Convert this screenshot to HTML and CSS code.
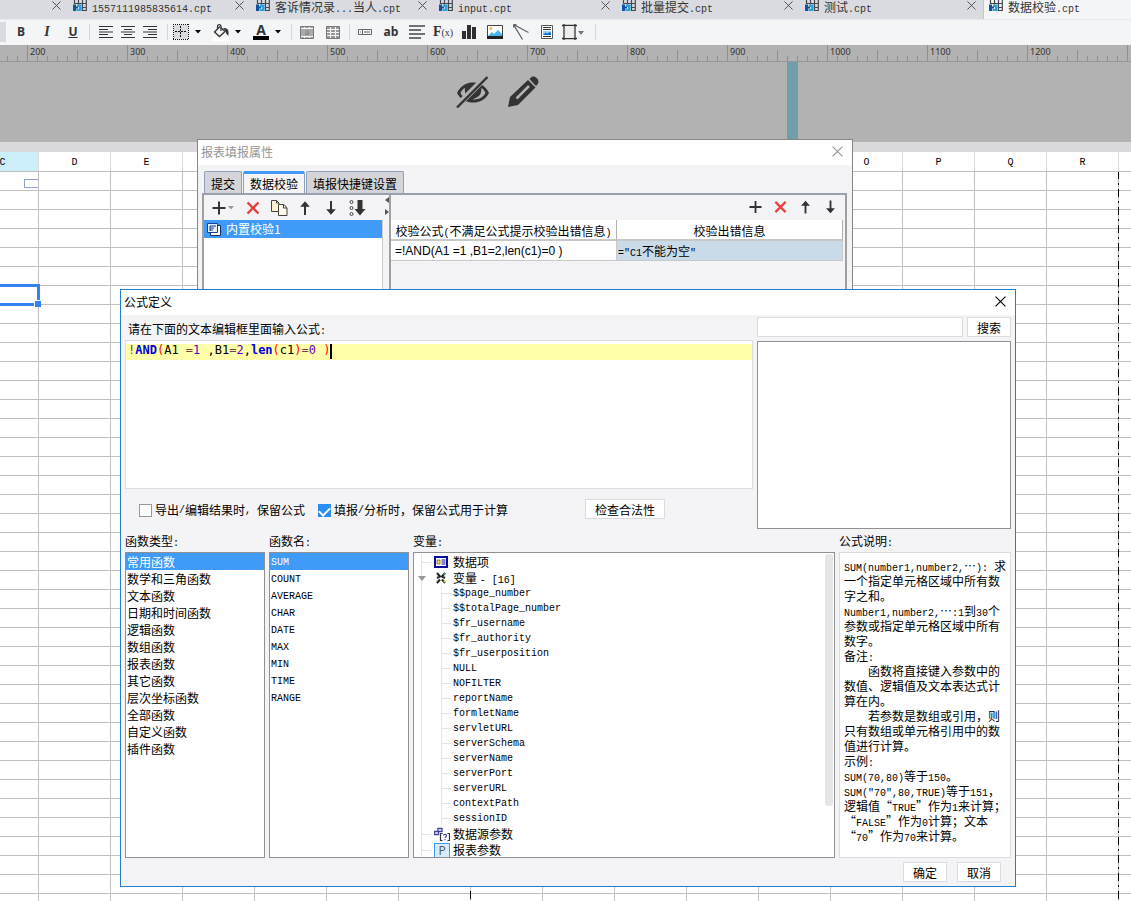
FILE: index.html
```html
<!DOCTYPE html>
<html lang="zh-CN">
<head>
<meta charset="utf-8">
<title>数据校验.cpt</title>
<link rel="stylesheet" href="styles.css">
</head>
<body>
<svg class="defs" aria-hidden="true">
  <symbol id="cpt" viewBox="0 0 14 12"><path d="M1.500 0v4M5.500 0v4.500M9.500 0v11M13.300 0v11M1 3.500h12.500M9 7.500h4.500M9 10.500h4.500" fill="none" stroke="#44474c" stroke-width="1.200"/><path d="M0 4.500h3v2h2v2H3v2.500H0z" fill="#0d55a0"/><path d="M4 4.500h4.500V11H6V7H4zM3.500 9H6v2H3.500z" fill="#2f9fdc"/></symbol>
  <symbol id="close" viewBox="0 0 10 10"><path d="M.5.5l9 9M9.500.5l-9 9" fill="none" stroke="currentColor"/></symbol>
  <symbol id="caret" viewBox="0 0 6 4"><path d="M0 0h6L3 3.500z" fill="currentColor"/></symbol>
  <symbol id="plus" viewBox="0 0 14 14"><path d="M7 .5v13M.5 7h13" fill="none" stroke="#333" stroke-width="2"/></symbol>
  <symbol id="cross" viewBox="0 0 14 14"><path d="M1.500 1.500l11 11M12.500 1.500l-11 11" fill="none" stroke="#e8403c" stroke-width="2.400"/></symbol>
  <symbol id="up" viewBox="0 0 14 14"><path d="M7 14V3" stroke="#333" stroke-width="2"/><path d="M7 .3l4.800 5.400H2.200z" fill="#333"/></symbol>
  <symbol id="down" viewBox="0 0 14 14"><path d="M7 0v11" stroke="#333" stroke-width="2"/><path d="M7 13.700l4.800-5.400H2.200z" fill="#333"/></symbol>
</svg>

<nav class="file-tabs">
  <div class="file-tab"><span class="file-name"></span><button aria-label="关闭"><svg><use href="#close"/></svg></button></div>
  <div class="file-tab"><svg class="cpt"><use href="#cpt"/></svg><span class="file-name"><span class="m">1557111985835614.cpt</span></span><button aria-label="关闭"><svg><use href="#close"/></svg></button></div>
  <div class="file-tab"><svg class="cpt"><use href="#cpt"/></svg><span class="file-name">客诉情况录<span class="m">...</span>当人<span class="m">.cpt</span></span><button aria-label="关闭"><svg><use href="#close"/></svg></button></div>
  <div class="file-tab"><svg class="cpt"><use href="#cpt"/></svg><span class="file-name"><span class="m">input.cpt</span></span><button aria-label="关闭"><svg><use href="#close"/></svg></button></div>
  <div class="file-tab"><svg class="cpt"><use href="#cpt"/></svg><span class="file-name">批量提交<span class="m">.cpt</span></span><button aria-label="关闭"><svg><use href="#close"/></svg></button></div>
  <div class="file-tab"><svg class="cpt"><use href="#cpt"/></svg><span class="file-name">测试<span class="m">.cpt</span></span><button aria-label="关闭"><svg><use href="#close"/></svg></button></div>
  <div class="file-tab active"><svg class="cpt"><use href="#cpt"/></svg><span class="file-name">数据校验<span class="m">.cpt</span></span></div>
</nav>

<div class="toolbar" role="toolbar">
  <span class="size-stub"></span>
  <div class="group"><button class="bold">B</button><button class="italic">I</button><button class="under">U</button></div>
  <i class="sep"></i>
  <div class="group narrow">
    <button aria-label="左对齐"><svg width="14" height="12"><path d="M0 .5h14M0 3.500h9M0 6h14M0 8.500h9M0 11.500h14" stroke="#333" stroke-width="1.200"/></svg></button>
    <button aria-label="居中"><svg width="14" height="12"><path d="M0 .5h14M3 3.500h8M0 6h14M3 8.500h8M0 11.500h14" stroke="#333" stroke-width="1.200"/></svg></button>
    <button aria-label="右对齐"><svg width="14" height="12"><path d="M0 .5h14M5 3.500h9M0 6h14M5 8.500h9M0 11.500h14" stroke="#333" stroke-width="1.200"/></svg></button>
  </div>
  <i class="sep"></i>
  <div class="group split">
    <button aria-label="边框"><svg width="16" height="16"><path d="M1 1h14v14H1z" fill="#dadbdf"/><path d="M0 .5h16M0 15.500h16M.5 0v16M15.500 0v16" stroke="#111" stroke-dasharray="1 1"/><path d="M2 7.500h12M7.500 2v12" stroke="#111" stroke-dasharray="2 1"/></svg></button><button class="drop" aria-label="更多"><svg width="6" height="4"><use href="#caret"/></svg></button>
    <button aria-label="背景色"><svg width="18" height="17"><path d="M1 13h16v4H1z" fill="#fff"/><path d="M8 2.500L2.500 8l5 4.500L13 7.500 8.500 3.500" fill="#f4f5f7" stroke="#333" stroke-width="1.300"/><path d="M5.500 5V2a1.800 1.800 0 013.500 0v5" fill="none" stroke="#333" stroke-width="1.200"/><path d="M11 4c3-.5 5.500 1 5.500 4v3.500C14.500 11 14 9 13.500 7z" fill="#333"/></svg></button><button class="drop" aria-label="更多"><svg width="6" height="4"><use href="#caret"/></svg></button>
    <button class="font-color"><b>A</b></button><button class="drop" aria-label="更多"><svg width="6" height="4"><use href="#caret"/></svg></button>
  </div>
  <i class="sep"></i>
  <div class="group">
    <button aria-label="合并"><svg width="14" height="13"><path d="M.5.5h13v12H.5z" fill="#aaa" stroke="#777"/><path d="M1 2.500h12M1 10.500h12" stroke="#f4f5f7"/><path d="M4.500 1v1M9.500 1v1M4.500 11v1M9.500 11v1" stroke="#f4f5f7"/><path d="M5.500 5h3v3.500h-3v-1.500h3" fill="none" stroke="#888"/></svg></button>
    <button aria-label="拆分"><svg width="14" height="13"><path d="M.5.5h13v12H.5z" fill="#999" stroke="#777"/><path d="M1 3.500h12M1 6.500h12M1 9.500h12M4.500 1v11M9.500 1v11" stroke="#f4f5f7"/></svg></button>
  </div>
  <i class="sep"></i>
  <div class="group last">
    <button aria-label="控件"><svg width="14" height="6"><path d="M.5.5h13v5H.5zM4.500 1v4M6 3h6M2 3h1" fill="none" stroke="#666"/></svg></button>
    <button class="ab">ab</button>
    <button aria-label="富文本"><svg width="16" height="14"><path d="M0 1h16M0 5h12M0 9h16M0 13h12" stroke="#444" stroke-width="1.500"/></svg></button>
    <button class="fx">F<small>(x)</small></button>
    <button aria-label="图表"><svg width="14" height="14"><path d="M0 6h4v8H0zM5 0h4v14H5zM10 2h4v12h-4z" fill="#2f2f2f"/></svg></button>
    <button aria-label="图片"><svg width="16" height="14"><path d="M.5.500h15v13H.5z" fill="#fff" stroke="#444"/><circle cx="3.800" cy="3.500" r="1.500" fill="#f6b04a"/><path d="M1 11L5 7l2 2 4-4 4 4v2z" fill="#45b5ee"/><path d="M0 11h16v3H0z" fill="#222"/></svg></button>
    <button aria-label="斜线"><svg width="16" height="16"><path d="M.5.5l15 8M.5.5l9 15M.5.5v3M.5.5h3" fill="none" stroke="#666" stroke-width="1.300"/></svg></button>
    <button aria-label="子报表"><svg width="12" height="14"><path d="M.5.5h11v13H.5z" fill="#fff" stroke="#555"/><path d="M2 2.500h8M2 4.500h8M2 11.500h8" stroke="#333"/><path d="M2 6h8v4H2z" fill="#9ad0f5"/><path d="M2 10l2.500-2.500 2 1 2-1.500L10 8v2z" fill="#1271c8"/></svg></button>
    <button aria-label="悬浮元素"><svg width="22" height="16"><path d="M2 0v16M13 0v16M0 1.500h15M0 14.500h15" stroke="#333" stroke-width="1.300"/><path d="M3 2h9v12H3z" fill="#eee"/><path d="M16 7h6l-3 4z" fill="#777"/></svg></button>
  </div>
  <i class="sep"></i>
</div>

<div class="ruler">
  <span></span><span>200</span><span>300</span><span>400</span><span>500</span><span>600</span><span>700</span><span>800</span><span>900</span><span>1000</span><span>1100</span><span>1200</span><span></span>
</div>

<section class="banner">
  <svg width="34" height="32" viewBox="0 0 34 32" aria-label="隐藏"><path d="M1 17C5 9 11 6.500 17 6.500S29 9 33 17c-4 7.500-10 9.500-16 9.500S5 24.500 1 17z" fill="#333"/><path d="M4.500 17c1-2.500 2.500-4 4.500-5-.6 4 .3 6.500 2.500 8.500l-2 1.800C7.500 21 5.600 19.500 4.500 17zM29.500 17c-1-2.500-2.300-4-4.300-5 .6 4-.9 8.500-5.700 10l-3 1.500c6.500 0 10.500-2 13-6.500z" fill="#b2b2b2"/><path d="M31 0L0 31" stroke="#b2b2b2" stroke-width="6"/><path d="M31.500 1L1 31.500" stroke="#333" stroke-width="2.400"/></svg>
  <svg width="32" height="32" viewBox="0 0 32 32" aria-label="编辑"><path d="M0 31l2-10L20 4l7.500 7.500L10 29z" fill="#333"/><path d="M8.500 22.500L21 10" stroke="#b2b2b2" stroke-width="2.500"/><path d="M21.500 3l2-2c3-2 8.500 2.500 6.500 6.500l-2 2.500z" fill="#333"/></svg>
  <i class="strip"></i>
</section>

<main class="sheet">
  <div class="columns"><span class="current">C</span><span>D</span><span>E</span><span>F</span><span>G</span><span>H</span><span>I</span><span>J</span><span>K</span><span>L</span><span>M</span><span>N</span><span>O</span><span>P</span><span>Q</span><span>R</span><span></span></div>
  <div class="cells"><i class="widget"></i><i class="selection"></i></div>
</main>

<section class="window props" aria-label="报表填报属性">
  <header><span>报表填报属性</span><button aria-label="关闭"><svg><use href="#close"/></svg></button></header>
  <div class="props-body">
    <div class="tabs" role="tablist"><button role="tab">提交</button><button role="tab" class="on">数据校验</button><button role="tab">填报快捷键设置</button></div>
    <div class="panel">
      <div class="left">
        <div class="tools">
          <button class="add" aria-label="添加"><svg><use href="#plus"/></svg><svg class="tiny"><use href="#caret"/></svg></button>
          <button aria-label="删除"><svg><use href="#cross"/></svg></button>
          <button aria-label="复制"><svg class="big" viewBox="0 0 17 16"><path d="M.5.5h5L8 3v8.500H.5zM5.500.5V3H8" fill="#fff3d2" stroke="#444"/><path d="M7.500 4.500H13L16 8v7.500H7.500zM12.500 4.500V8H16" fill="#fff9ea" stroke="#444"/></svg></button>
          <button aria-label="上移"><svg><use href="#up"/></svg></button>
          <button aria-label="下移"><svg><use href="#down"/></svg></button>
          <button aria-label="排序"><svg class="big" viewBox="0 0 16 16"><g fill="none" stroke="#444"><circle cx="2" cy="2" r="1.500"/><circle cx="2" cy="8" r="1.500"/><circle cx="2" cy="14" r="1.500"/></g><path d="M8 0h5v9h3l-5.500 6.500L5 9h3z" fill="#333"/></svg></button>
        </div>
        <div class="checks"><div class="check"><svg width="14" height="13"><path d="M3.500 2.500h10v10h-10z" fill="#fff" stroke="#1c2f6d"/><path d="M.5.500h10v9H.5z" fill="#e6efff" stroke="#1c3c96"/><path d="M3 3h6M3 5h4M3 7h3M3 3v5" stroke="#1c3c96"/></svg>内置校验1</div></div>
      </div>
      <div class="divider"><svg width="4" height="18"><path d="M4 0v6L0 3zM0 12v6l4-3z" fill="#555"/></svg></div>
      <div class="right">
        <div class="tools end">
          <button aria-label="添加"><svg><use href="#plus"/></svg></button>
          <button aria-label="删除"><svg><use href="#cross"/></svg></button>
          <button aria-label="上移"><svg><use href="#up"/></svg></button>
          <button aria-label="下移"><svg><use href="#down"/></svg></button>
        </div>
        <table>
          <thead><tr><th>校验公式<span class="m">(</span>不满足公式提示校验出错信息<span class="m">)</span></th><th>校验出错信息</th></tr></thead>
          <tbody><tr><td class="expr">=!AND(A1 =1 ,B1=2,len(c1)=0 )</td><td class="msg"><span class="m">="C1</span>不能为空<span class="m">"</span></td></tr></tbody>
        </table>
      </div>
    </div>
  </div>
</section>

<section class="window formula" aria-label="公式定义">
  <header><span>公式定义</span><button aria-label="关闭"><svg><use href="#close"/></svg></button></header>
  <div class="formula-body">
    <div class="top">
      <div class="edit">
        <label id="editor-label">请在下面的文本编辑框里面输入公式<span class="m">:</span></label>
        <div class="editor" role="textbox" aria-labelledby="editor-label" contenteditable="true" spellcheck="false"><div class="line"><span class="op">!</span><b>AND</b><span class="par">(</span>A1 <span class="op">=</span><span class="num">1</span> ,B1<span class="op">=</span><span class="num">2</span>,<b>len</b><span class="par">(</span>c1<span class="par">)</span><span class="op">=</span><span class="num">0</span> <span class="par">)</span><i class="cursor"></i></div></div>
        <div class="options">
          <label><input type="checkbox">导出<span class="m">/</span>编辑结果时<span class="m">, </span>保留公式</label>
          <label><input type="checkbox" checked>填报<span class="m">/</span>分析时，保留公式用于计算</label>
          <button class="btn wide">检查合法性</button>
        </div>
      </div>
      <div class="search">
        <div class="search-row"><input type="text" aria-label="搜索函数"><button class="btn">搜索</button></div>
        <div class="results"></div>
      </div>
    </div>
    <div class="lists">
      <div class="col narrow-col"><h3>函数类型<span class="m">:</span></h3>
        <ul class="box rows" role="listbox"><li class="on">常用函数</li><li>数学和三角函数</li><li>文本函数</li><li>日期和时间函数</li><li>逻辑函数</li><li>数组函数</li><li>报表函数</li><li>其它函数</li><li>层次坐标函数</li><li>全部函数</li><li>自定义函数</li><li>插件函数</li></ul></div>
      <div class="col narrow-col"><h3>函数名<span class="m">:</span></h3>
        <ul class="box rows names" role="listbox"><li class="on">SUM</li><li>COUNT</li><li>AVERAGE</li><li>CHAR</li><li>DATE</li><li>MAX</li><li>MIN</li><li>TIME</li><li>RANGE</li></ul></div>
      <div class="col vars"><h3>变量<span class="m">:</span></h3>
        <div class="box tree-box">
          <ul class="tree">
            <li><div class="node"><svg width="14" height="12"><path d="M1 1h12v10H1z" fill="#fff" stroke="#0a0a9c" stroke-width="2"/><path d="M3 4h3v4H3z" fill="#ffe14a" stroke="#333" stroke-width=".6"/><path d="M7.500 4h4M7.500 6h4M7.500 8h4" stroke="#0a0a9c"/></svg>数据项</div></li>
            <li><div class="node open"><svg width="14" height="12"><path d="M3 1l3 3.500L3 6M11 1L8 4.500 11 6M3 11l3-3.500M11 11L8 7.500" fill="none" stroke="#222" stroke-width="2"/><path d="M9.500 1h2v2h-2z" fill="#3c9b93"/><path d="M9.500 8.500h2v2h-2z" fill="#d3d33c"/></svg><span>变量 <span class="m">- [16]</span></span></div>
              <ul><li>$$page_number</li><li>$$totalPage_number</li><li>$fr_username</li><li>$fr_authority</li><li>$fr_userposition</li><li>NULL</li><li>NOFILTER</li><li>reportName</li><li>formletName</li><li>servletURL</li><li>serverSchema</li><li>serverName</li><li>serverPort</li><li>serverURL</li><li>contextPath</li><li>sessionID</li></ul></li>
            <li><div class="node"><svg width="16" height="15"><path d="M4 1.500h4v3H4zM.5 4.500h4v3h-4z" fill="#fff" stroke="#44449c" stroke-width="1.300"/><path d="M8.500 6.500h-2v7h2M13.500 6.500h2v7h-2" fill="none" stroke="#333" stroke-width="1.200"/><path d="M9.500 8.500c0-1.500 3-1.500 3 0s-1.500 1.300-1.500 2.500M11 12v1.200" fill="none" stroke="#44449c" stroke-width="1.200"/></svg>数据源参数</div></li>
            <li><div class="node"><i class="p-icon">P</i>报表参数</div></li>
          </ul>
          <i class="thumb"></i>
        </div></div>
      <div class="col desc-col"><h3>公式说明<span class="m">:</span></h3>
        <div class="box desc"><span class="m">SUM(number1,number2,</span>…<span class="m">): </span>求<br>一个指定单元格区域中所有数<br>字之和。<br><span class="m">Number1,number2,</span>…<span class="m">:1</span>到<span class="m">30</span>个<br>参数或指定单元格区域中所有<br>数字。<br>备注<span class="m">:</span><br>　　函数将直接键入参数中的<br>数值、逻辑值及文本表达式计<br>算在内。<br>　　若参数是数组或引用，则<br>只有数组或单元格引用中的数<br>值进行计算。<br>示例<span class="m">:</span><br><span class="m">SUM(70,80)</span>等于<span class="m">150</span>。<br><span class="m">SUM("70",80,TRUE)</span>等于<span class="m">151</span>，<br>逻辑值“<span class="m">TRUE</span>”作为<span class="m">1</span>来计算；<br>“<span class="m">FALSE</span>”作为<span class="m">0</span>计算；文本<br>“<span class="m">70</span>”作为<span class="m">70</span>来计算。</div></div>
    </div>
    <footer><button class="btn">确定</button><button class="btn">取消</button></footer>
  </div>
</section>
</body>
</html>
```
FILE: styles.css
```css
* { box-sizing: border-box; }
body {
  margin: 0;
  height: 100vh;
  overflow: hidden;
  position: relative;
  display: flex;
  flex-direction: column;
  font: 12px/16px "Noto Sans CJK SC", sans-serif;
  color: #000;
  background: #fff;
}
ul { list-style: none; margin: 0; padding: 0; }
button { font: inherit; color: inherit; background: none; border: 0; padding: 0; display: flex; align-items: center; justify-content: center; }
svg { display: block; flex: none; }
.defs { position: absolute; width: 0; height: 0; }
.m { font-family: "Liberation Mono", monospace; font-size: 10px; line-height: 1px; white-space: pre; }

/* file tabs */
.file-tabs { display: flex; flex: none; height: 19px; margin-left: -115px; background: #d9dbe0; overflow: hidden; }
.file-tab { flex: none; width: 183px; height: 19px; display: flex; align-items: flex-start; padding: 0 7px 0 5px; color: #333; }
.file-tab.active { background: #f4f5f7; border-left: 1px solid #c4c6cb; flex: 1 0 183px; }
.file-tab .cpt { width: 14px; height: 12px; margin-right: 5px; }
.file-name { flex: 1; line-height: 13px; white-space: nowrap; }
.file-tab button { color: #444; height: 11px; }
.file-tab button svg { width: 9px; height: 9px; }

/* main toolbar */
.toolbar { flex: none; height: 26px; display: flex; align-items: center; background: #f4f5f7; border-top: 1px solid #e8e9ec; padding-bottom: 1px; color: #333; }
.size-stub { width: 6px; height: 20px; background: #d9dbe0; margin-right: 2px; }
.group { display: flex; }
.group button { width: 26px; height: 22px; }
.group.narrow { padding: 0 3px; }
.group.narrow button { width: 22px; }
.group.split { padding-right: 4px; }
.group.split button { width: 22px; }
.group.split .drop { width: 12px; color: #000; margin-right: 6px; }
.group.split .drop:last-child { margin-right: 0; }
.group.last { padding-right: 6px; }
.sep { flex: none; width: 1px; height: 16px; background: #d5d6da; margin: 0 2px 0 3px; }
.bold, .italic, .under, .ab { font-family: "Open Sans", sans-serif; font-weight: 700; }
.group .italic { font-family: "Liberation Serif", serif; font-style: italic; font-size: 14px; }
.under { text-decoration: underline; }
.font-color b { width: 16px; height: 16px; border-bottom: 4px solid #000; font: 700 14px/11px "Open Sans", sans-serif; }
.fx { font: 700 14px "Liberation Serif", serif; }
.fx small { font-size: 10px; font-weight: 400; }

/* ruler */
.ruler {
  flex: none; height: 17px; display: flex; margin-left: -73px; overflow: hidden;
  background-color: #b2b2b2; border-bottom: 1px solid #979797;
  background-image: repeating-linear-gradient(to right, #8f8f8f 0 1px, transparent 1px 10px), repeating-linear-gradient(to right, #8f8f8f 0 1px, transparent 1px 50px);
  background-size: 100% 5px, 100% 11px;
  background-position: 0 100%; background-repeat: no-repeat;
}
.ruler span { flex: 0 0 100px; border-left: 1px solid #8f8f8f; padding-left: 2px; font: 9px/14px "Noto Sans", sans-serif; color: #333; }

.banner { flex: none; height: 80px; background: #b2b2b2; display: flex; gap: 18px; padding: 14px 0 0 456px; position: relative; }
.strip { position: absolute; left: 787px; top: 0; bottom: 0; width: 11px; background: #6f9fab; }

/* sheet */
.sheet { flex: 1; display: flex; flex-direction: column; border-top: 10px solid #dadadc; }
.columns { flex: none; display: flex; height: 20px; border-bottom: 1px solid #c0c0c0; margin-left: -33px; overflow: hidden; }
.columns span { flex: 0 0 72px; border-right: 1px solid #dadadc; font: 10px/22px "Liberation Mono", monospace; text-align: center; }
.columns .current { background: #cdeffc; }
.cells {
  flex: 1; position: relative;
  background-image:
    repeating-linear-gradient(to bottom, #000 0 8px, transparent 8px 12px, #000 12px 14px, transparent 14px 18px),
    repeating-linear-gradient(to bottom, #000 0 8px, transparent 8px 12px, #000 12px 14px, transparent 14px 18px),
    linear-gradient(to right, #c0c0c0 1px, transparent 1px),
    linear-gradient(to bottom, transparent 18px, #c0c0c0 18px);
  background-size: 1px 18px, 1px 18px, 72px 19px, 72px 19px;
  background-position: 470px -1px, 1118px -1px, 38px 0, 0 0;
  background-repeat: repeat-y, repeat-y, repeat, repeat;
}
.widget { position: absolute; left: 24px; top: 7px; width: 14px; height: 9px; border: 1px solid #8fa3cc; border-right: 0; }
.selection { position: absolute; left: -4px; top: 112px; width: 44px; height: 22px; border: 3px solid #3382f0; }
.selection::after { content: ""; position: absolute; right: -4px; bottom: -4px; width: 6px; height: 6px; background: #3382f0; border: solid #fff; border-width: 1px 0 0 1px; }

/* windows */
.window { position: absolute; background: #f4f4f6; }
.window header { height: 25px; background: #fff; display: flex; justify-content: space-between; align-items: center; padding: 0 9px 2px 3px; }
.window header svg { width: 11px; height: 11px; }
.props { left: 197px; right: 278px; top: 139px; height: 400px; border: 1px solid #868686; display: flex; flex-direction: column; color: #000; }
.props header { color: #949494; }
.props-body { flex: 1; display: flex; flex-direction: column; padding: 6px 5px 0 4px; }
.tabs { display: flex; gap: 1px; padding-left: 2px; align-items: flex-end; }
.tabs button { height: 22px; padding: 2px 6px 0; border: 1px solid #8e9fbc; border-bottom: 0; background: #d5d5d9; border-radius: 2px 2px 0 0; white-space: nowrap; }
.tabs .on { background: #f4f4f6; border-top: 3px solid #409bf8; padding-top: 0; }
.panel { flex: 1; display: flex; border: 2px solid #98a1b0; border-color: #98a1b0 #a0a0a0; }
.left { flex: 0 0 179px; display: flex; flex-direction: column; }
.tools { display: flex; height: 25px; align-items: center; }
.tools button { width: 26px; height: 24px; }
.tools svg { width: 14px; height: 14px; }
.tools .big { width: 17px; height: 16px; }
.tools .add { width: 36px; justify-content: flex-start; gap: 2px; padding-left: 8px; color: #999; }
.tools .tiny { width: 6px; height: 4px; }
.tools.end { justify-content: flex-end; height: 23px; }
.tools.end button { width: 25px; }
.tools.end svg { width: 13px; height: 14px; }
.checks { flex: 1; background: #fff; border-right: 1px solid #ccc; }
.check { display: flex; gap: 5px; align-items: center; height: 18px; background: #409bf8; color: #fff; padding-left: 3px; }
.divider { flex: 0 0 8px; border-right: 2px solid #a0a0a0; display: flex; justify-content: flex-end; padding-top: 2px; }
.right { flex: 1; padding-right: 2px; }
.right table { width: 100%; border-collapse: separate; border-spacing: 0; table-layout: fixed; margin-top: 2px; }
.right th { height: 21px; padding: 3px 0 0; font-weight: 400; background: #fff; border-bottom: 2px solid #c8c8c8; border-right: 1px solid #b0b0b0; white-space: nowrap; }
.right td { height: 20px; padding: 0 0 0 4px; border-bottom: 1px solid #c8c8c8; border-right: 1px solid #c8c8c8; line-height: 18px; }
.expr { background: #fff; font-family: "Liberation Sans", Arial, sans-serif; }
.right .msg { background: #c9dbe9; padding-left: 1px; }

.formula { left: 120px; right: 115px; top: 289px; border: 1px solid #1c80cf; }
.formula-body { padding: 1px 4px 4px; }
.top { display: flex; gap: 4px; }
.edit { flex: 1; display: flex; flex-direction: column; }
.edit > label { height: 24px; line-height: 26px; padding-left: 3px; }
.editor { height: 149px; background: #fff; border: 1px solid #dcdce0; padding-top: 3px; outline: 0; font: 12px/13px "DejaVu Sans Mono", monospace; }
.line { background: #ffffaa; padding-left: 2px; white-space: pre; height: 16px; }
.line b { color: #0000e0; }
.op { color: #804040; }
.par { color: #f00; }
.num { color: #6400c8; }
.cursor { display: inline-block; vertical-align: top; width: 2px; height: 15px; background: #000; }
.options { display: flex; align-items: center; height: 41px; padding: 1px 0 0 14px; }
.options label { display: flex; align-items: center; margin-right: 13px; white-space: nowrap; }
.options input { appearance: none; margin: 0 3px 0 0; width: 13px; height: 13px; border: 1px solid #999; background: #fff; }
.options input:checked { border-color: #2a8df0; background: #2a8df0; display: flex; justify-content: center; }
.options input:checked::before { content: ""; width: 5px; height: 9px; border: solid #fff; border-width: 0 2px 2px 0; transform: rotate(45deg); }
.btn { height: 20px; min-width: 44px; background: #fff; border: 1px solid #dcdce0; padding-top: 1px; }
.btn.wide { width: 80px; margin: 0 88px 2px auto; }
.search { flex: 0 0 254px; display: flex; flex-direction: column; }
.search-row { display: flex; gap: 4px; padding-top: 1px; }
.search-row input { flex: 1; min-width: 0; height: 20px; border: 1px solid #dcdce0; background: #fff; padding: 0 3px; font: inherit; }
.results { height: 188px; margin-top: 4px; background: #fff; border: 1px solid #909090; }
.lists { display: flex; gap: 4px; }
.col { display: flex; flex-direction: column; }
.narrow-col { flex: 0 0 140px; }
.vars { flex: 1; }
.desc-col { flex: 0 0 172px; }
.col h3 { margin: 0; font-size: 12px; font-weight: 400; line-height: 22px; height: 22px; }
.box { height: 306px; background: #fff; border: 1px solid #909090; overflow: hidden; }
.rows li { line-height: 17px; height: 17px; padding-left: 1px; }
.rows .on { background: #409bf8; color: #fff; }
.names { font-family: "Liberation Mono", monospace; font-size: 10px; }
.rows.names li { line-height: 19px; }
.tree-box { display: flex; justify-content: space-between; padding: 1px 1px 0 7px; }
.tree { border-left: 1px solid #e6e6e6; }
.node { display: flex; align-items: center; height: 16px; gap: 3px; white-space: nowrap; }
.node::before { content: ""; width: 9px; height: 1px; background: #e6e6e6; }
.node > svg, .p-icon { width: 16px; }
.node.open::before { width: 0; height: 0; background: none; border: 4px solid transparent; border-top: 5px solid #999; border-bottom: 0; margin: 0 5px 0 -4px; }
.p-icon { height: 15px; border: 1px solid #409bf8; background: #d8ebfb; color: #555; font: 12px/13px "Open Sans", sans-serif; text-align: center; }
.tree ul { margin-left: 19px; border-left: 1px solid #e6e6e6; }
.tree ul li { display: flex; align-items: center; gap: 2px; height: 15px; font: 10px/15px "Liberation Mono", monospace; }
.tree ul li::before { content: ""; width: 9px; height: 1px; background: #e6e6e6; }
.thumb { width: 8px; height: 252px; background: #e6e6e6; border-radius: 3px; }
.desc { border-color: #dcdce0; padding: 5px 0 0 4px; line-height: 15px; white-space: nowrap; }
footer { display: flex; justify-content: flex-end; gap: 10px; padding: 4px 10px 0 0; }
```
